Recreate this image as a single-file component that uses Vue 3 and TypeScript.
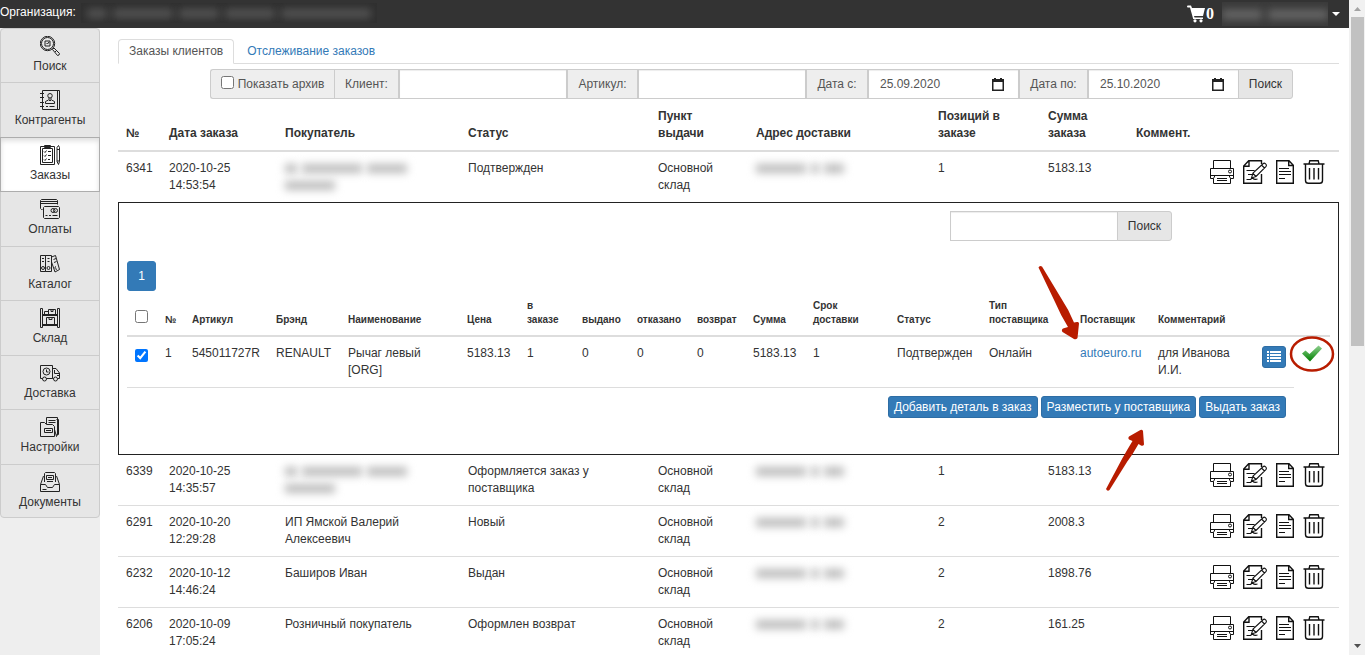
<script setup lang="ts">
import { ref } from 'vue'

interface MenuItem {
  title: string
  icon: string
}

interface Order {
  id: string
  date: string
  time: string
  customer: string
  status: string
  positions: number
  total: string
  open?: boolean
}

const menu: MenuItem[] = [
  { title: 'Поиск', icon: 'M7.500 1.500a6 6 0 1 0 0 12a6 6 0 1 0 0-12M7.500 .3a7.200 7.200 0 1 0 0 14.400a7.200 7.200 0 1 0 0-14.400M5 5h5v5H5zM6.500 7l1 1 1.500-2M12.500 13.500l1.500-1.500 5.500 5.500q0 2-2 2zM15 16l1.500-1.500' },
  { title: 'Контрагенты', icon: 'M2.500 .5h17v19h-17zM17.500 .5v19M0 3.500h4M0 7.500h4M0 12.500h4M0 16.500h4M10 3.500a2.200 2.200 0 1 0 0 4.500a2.200 2.200 0 1 0 0-4.500M9 8v2l1 1 1-1V8M5.500 13.500v-2l3-1.500M14.500 13.500v-2l-3-1.500M5.500 13.500h9M6 16.500h2M9.500 16.500h5' },
  { title: 'Заказы', icon: 'M.5 1.500h14v18H.5zM2.500 3.500h10v14h-10zM4.500 .5h6v2h-6zM4 6.500l1 1 1.500-2M8 6.500h3M4 10.500l1 1 1.500-2M8 10.500h3M4 14.500l1 1 1.500-2M8 14.500h2M17 2.500l1.500-2 1 2v14l-1 3-1.500-3zM17 4.500h2.500M17 16h2.500' },
  { title: 'Оплаты', icon: 'M2.500 10.500h-1l-1-1V1.500l1-1h15l1 1v4M.5 2.500h17M.5 4.500h17M3.500 8.500l1-1h14l1 1v10l-1 1h-14l-1-1zM13 9.500a2 2 0 1 0 0 4a2 2 0 1 0 0-4M15.500 9.500a2 2 0 1 0 0 4a2 2 0 1 0 0-4M5.500 16.500h2M9 16.500h2M12.500 16.500h5' },
  { title: 'Каталог', icon: 'M.5 1.500h5v16h-5zM5.500 1.500h6v16h-6zM2 4.500h2M2 7.500h2M7.500 4.500h2M7.500 7.500h2M3 12.500a1.500 1.500 0 1 0 0 3a1.500 1.500 0 1 0 0-3M8.500 12.500a1.500 1.500 0 1 0 0 3a1.500 1.500 0 1 0 0-3M11.500 3l4-1.500 4 14-4.500 2.500-3.500-10M13.500 5.500l2.500-1M14 8.500l2.500-1M16 12.500a1.400 1.400 0 1 0 1 2.600' },
  { title: 'Склад', icon: 'M.5 .5h2v19h-2zM17.500 .5h2v19h-2zM2.500 6.500h15M2.500 7.500h15M2.500 16.500h15M2.500 17.500h15M8.500 6.500v-5h7v5M11 1.500v2h2v-2M4.500 6.500v-3h4M6.500 16.500v-7h8v7M9 9.500v2h3v-2' },
  { title: 'Доставка', icon: 'M2.500 15.500h-2V2.500h12v13h-6M12.500 5.500h3.500l3.500 4.500v5.500h-2M12.500 15.500h1M14.500 7v3.500h4.500M4.500 14a2 2 0 1 0 0 4a2 2 0 1 0 0-4M15.500 14a2 2 0 1 0 0 4a2 2 0 1 0 0-4M6.500 5a3.500 3.500 0 1 0 0 7a3.500 3.500 0 1 0 0-7M6.500 6.500v2.500h2M17 12.500h2' },
  { title: 'Настройки', icon: 'M.5 19.500V5.500h4l2 2h6l2 2v10zM6.500 7V.5h11v17M8.500 3.500h7M8.500 5.500h7M16.500 2.500h2v15h-2M14.500 12.500l2 7 1-2M4.500 11.500h8v4h-8zM6 13.500h5' },
  { title: 'Документы', icon: 'M4.500 10V1.500l1-1h9l1 1V10M6.500 3.500h7v4h-7zM7 9.500h6M3.500 4L.5 12.500v7h19v-7L16.500 4M.5 12.500h5l2 3h5l2-3h5M2.500 17.500h4M8 5.500h4' }
]
const activeMenu = ref('Заказы')

const orders: Order[] = [
  { id: '6341', date: '2020-10-25', time: '14:53:54', customer: '', status: 'Подтвержден', positions: 1, total: '5183.13', open: true },
  { id: '6339', date: '2020-10-25', time: '14:35:57', customer: '', status: 'Оформляется заказ у поставщика', positions: 1, total: '5183.13' },
  { id: '6291', date: '2020-10-20', time: '12:29:28', customer: 'ИП Ямской Валерий Алексеевич', status: 'Новый', positions: 2, total: '2008.3' },
  { id: '6232', date: '2020-10-12', time: '14:46:24', customer: 'Баширов Иван', status: 'Выдан', positions: 2, total: '1898.76' },
  { id: '6206', date: '2020-10-09', time: '17:05:24', customer: 'Розничный покупатель', status: 'Оформлен возврат', positions: 2, total: '161.25' }
]

const showArchive = ref(false)
const client = ref('')
const article = ref('')
const dateFrom = ref('25.09.2020')
const dateTo = ref('25.10.2020')
const itemSearch = ref('')
const allChecked = ref(false)
const itemChecked = ref(true)
</script>

<template>
  <div class="app">
    <div class="window">
      <header class="topbar">
        <span class="org">Организация:</span>
        <span class="org-hidden" aria-hidden="true"><i class="w20"></i><i class="w60"></i><i class="w40"></i><i class="w50"></i><i class="w90"></i></span>
        <a class="cart" href="#" aria-label="Корзина">
          <svg width="19" height="18" viewBox="0 0 19 18" fill="#fff">
            <path d="M0 1.500Q0 .5 1 .5h3l1 2.500h13l-2 8H7l.5 1.500H16V14H6.200L3 2.500H1Q0 2.500 0 1.500z" />
            <circle cx="8" cy="15.800" r="1.600" /><circle cx="14" cy="15.800" r="1.600" />
          </svg><span>0</span>
        </a>
        <a class="user" href="#" aria-label="Пользователь">
          <span class="user-hidden" aria-hidden="true"><i class="w40"></i><i class="w60"></i></span>
          <span class="caret"></span>
        </a>
      </header>

      <div class="body">
        <aside class="sidebar">
          <nav class="menu">
            <button
              v-for="item in menu"
              :key="item.title"
              type="button"
              class="menu-item"
              :class="{ active: item.title === activeMenu }"
              @click="activeMenu = item.title"
            >
              <svg width="20" height="20" viewBox="0 0 20 20"><path :d="item.icon" /></svg>
              <span>{{ item.title }}</span>
            </button>
          </nav>
        </aside>

        <main class="main">
          <nav class="tabs">
            <a href="#" class="tab current">Заказы клиентов</a>
            <a href="#" class="tab">Отслеживание заказов</a>
          </nav>

          <form class="filter" @submit.prevent>
            <label class="addon archive"><input v-model="showArchive" type="checkbox" class="tick" /> Показать архив</label>
            <label class="addon client" for="client">Клиент:</label>
            <input id="client" v-model="client" type="text" class="field" />
            <label class="addon article" for="article">Артикул:</label>
            <input id="article" v-model="article" type="text" class="field" />
            <label class="addon from" for="from">Дата с:</label>
            <div class="date">
              <input id="from" v-model="dateFrom" type="text" />
              <svg width="12" height="13" viewBox="0 0 12 13"><path d="M2 0h2v1h4V0h2v1h2v12H0V1h2zM1.500 4v7.500h9V4z" fill="#222" fill-rule="evenodd" /></svg>
            </div>
            <label class="addon to" for="to">Дата по:</label>
            <div class="date">
              <input id="to" v-model="dateTo" type="text" />
              <svg width="12" height="13" viewBox="0 0 12 13"><path d="M2 0h2v1h4V0h2v1h2v12H0V1h2zM1.500 4v7.500h9V4z" fill="#222" fill-rule="evenodd" /></svg>
            </div>
            <button type="submit" class="search-btn">Поиск</button>
          </form>

          <table class="orders">
            <colgroup>
              <col class="c-id" /><col class="c-date" /><col class="c-customer" /><col class="c-status" /><col class="c-point" />
              <col class="c-address" /><col class="c-positions" /><col class="c-total" /><col /><col class="c-actions" />
            </colgroup>
            <thead>
              <tr>
                <th>№</th>
                <th>Дата заказа</th>
                <th>Покупатель</th>
                <th>Статус</th>
                <th>Пункт выдачи</th>
                <th>Адрес доставки</th>
                <th>Позиций в<br />заказе</th>
                <th>Сумма<br />заказа</th>
                <th>Коммент.</th>
                <th></th>
              </tr>
            </thead>
            <tbody>
              <template v-for="order in orders" :key="order.id">
                <tr class="order">
                  <td>{{ order.id }}</td>
                  <td>{{ order.date }}<br />{{ order.time }}</td>
                  <td>
                    <template v-if="order.customer">{{ order.customer }}</template>
                    <span v-else class="hidden-text" aria-hidden="true">
                      <span><i class="w12"></i><i class="w60"></i><i class="w40"></i></span>
                      <span><i class="w50"></i></span>
                    </span>
                  </td>
                  <td>{{ order.status }}</td>
                  <td>Основной<br />склад</td>
                  <td>
                    <span class="hidden-text" aria-hidden="true">
                      <span><i class="w50"></i><i class="w8"></i><i class="w20"></i></span>
                    </span>
                  </td>
                  <td>{{ order.positions }}</td>
                  <td>{{ order.total }}</td>
                  <td></td>
                  <td>
                    <div class="actions">
                      <button type="button" aria-label="Печать">
                        <svg width="24" height="24" viewBox="0 0 24 24">
                          <path d="M3.500 8V.5h17V8M.5 8.500h23v10h-3M3.500 18.500h-3v-10M.5 15.500h23M5 15.500l-1.500 3v5h17v-5l-1.500-3M7 18.500h10M7 20.500h10" />
                          <circle cx="20" cy="11.500" r="1.500" />
                        </svg>
                      </button>
                      <button type="button" aria-label="Редактировать">
                        <svg width="24" height="24" viewBox="0 0 24 24" class="bold">
                          <path d="M18.500 14v9.300H.7V6l5-5.300h12.800V4M1 6.200h5V1" />
                          <path d="M8.500 18l1.500-5L20.300 3.500q1-.8 2.300.4t.5 2.400L13 16.500zM10 13.500l3 3M18.500 5l3 3M3.500 10.500h8M5 14.500h4M3.500 19.500h4l2-1.500q2 2 5 1" class="thin" />
                        </svg>
                      </button>
                      <button type="button" aria-label="Документ">
                        <svg width="18" height="24" viewBox="0 0 18 24" class="bold">
                          <path d="M.7.7H13l4.300 4.500v18.100H.7zM12.700 1v4.500h4.500" />
                          <path d="M3 8.500h10M3 11.500h12M3 14.500h12M3 18.500h6" class="thin" />
                        </svg>
                      </button>
                      <button type="button" aria-label="Удалить">
                        <svg width="22" height="24" viewBox="0 0 22 24" class="bold">
                          <path d="M.5 4h21M6 3.800L6.800.7h8.400L16 3.800M2.500 4.500v16q0 2.800 2.800 2.800h11.400q2.800 0 2.800-2.800v-16M6.500 8v11.500M11 8v11.500M15.500 8v11.500" />
                        </svg>
                      </button>
                    </div>
                  </td>
                </tr>
                <tr v-if="order.open" class="detail-row">
                  <td colspan="10">
                    <section class="detail">
                      <form class="detail-search" @submit.prevent>
                        <input v-model="itemSearch" type="text" class="field" aria-label="Поиск" />
                        <button type="submit" class="search-btn">Поиск</button>
                      </form>
                      <div class="pager"><button type="button">1</button></div>
                      <table class="items">
                        <colgroup>
                          <col class="i-check" /><col class="i-num" /><col class="i-article" /><col class="i-brand" /><col class="i-name" />
                          <col class="i-price" /><col class="i-count" /><col class="i-count" /><col class="i-refused" /><col class="i-return" />
                          <col class="i-sum" /><col class="i-term" /><col class="i-status" /><col class="i-type" /><col class="i-supplier" />
                          <col /><col class="i-list" /><col class="i-done" />
                        </colgroup>
                        <thead>
                          <tr>
                            <th><input v-model="allChecked" type="checkbox" class="tick" aria-label="Выбрать все" /></th>
                            <th>№</th>
                            <th>Артикул</th>
                            <th>Брэнд</th>
                            <th>Наименование</th>
                            <th>Цена</th>
                            <th>в<br />заказе</th>
                            <th>выдано</th>
                            <th>отказано</th>
                            <th>возврат</th>
                            <th>Сумма</th>
                            <th>Срок<br />доставки</th>
                            <th>Статус</th>
                            <th>Тип<br />поставщика</th>
                            <th>Поставщик</th>
                            <th>Комментарий</th>
                            <th></th>
                            <th></th>
                          </tr>
                        </thead>
                        <tbody>
                          <tr>
                            <td><input v-model="itemChecked" type="checkbox" class="tick" aria-label="Выбрать позицию 1" /></td>
                            <td>1</td>
                            <td>545011727R</td>
                            <td>RENAULT</td>
                            <td>Рычаг левый<br />[ORG]</td>
                            <td>5183.13</td>
                            <td>1</td>
                            <td>0</td>
                            <td>0</td>
                            <td>0</td>
                            <td>5183.13</td>
                            <td>1</td>
                            <td>Подтвержден</td>
                            <td>Онлайн</td>
                            <td><a href="#">autoeuro.ru</a></td>
                            <td>для Иванова<br />И.И.</td>
                            <td>
                              <button type="button" class="list-btn" aria-label="Подробнее">
                                <svg width="14" height="12" viewBox="0 0 14 12" fill="#fff">
                                  <path d="M0 0h2v2H0zM3 0h11v2H3zM0 3h2v2H0zM3 3h11v2H3zM0 6h2v2H0zM3 6h11v2H3zM0 9h2v2H0zM3 9h11v2H3z" />
                                </svg>
                              </button>
                            </td>
                            <td>
                              <div class="done">
                                <svg width="20" height="17" viewBox="0 0 20 17">
                                  <defs>
                                    <linearGradient id="tick-fill" x1="0" y1="0" x2="0" y2="1">
                                      <stop offset="0" stop-color="#8fcf8f" />
                                      <stop offset=".55" stop-color="#3fa53f" />
                                      <stop offset="1" stop-color="#007c00" />
                                    </linearGradient>
                                  </defs>
                                  <path d="M0 8.500L3.500 5.500L7.500 9L16.500.5L20 3.500L8 16.500z" fill="url(#tick-fill)" />
                                </svg>
                                <svg class="ring" width="46" height="38" viewBox="0 0 46 38">
                                  <ellipse cx="23" cy="19" rx="21" ry="16.500" fill="none" stroke="#b81c00" stroke-width="2.500" />
                                </svg>
                              </div>
                            </td>
                          </tr>
                          <tr class="buttons">
                            <td colspan="17">
                              <div>
                                <button type="button">Добавить деталь в заказ</button>
                                <button type="button">Разместить у поставщика</button>
                                <button type="button">Выдать заказ</button>
                              </div>
                            </td>
                          </tr>
                        </tbody>
                      </table>
                    </section>
                    <svg class="arrows" width="110" height="235" viewBox="0 0 110 235" fill="#b81c00">
                      <path d="M3.500 5.500q1-2.500 3.500-1L26 36Q34 48 39 60.500L42 60q2-.5 2 1.500L42.500 76q-1.500 2-3.500 1L27.500 70q-1.500-2 .5-3.500L33 65Q26 54 20 40z" />
                      <path d="M104.500 168.500q2.500-1.500 3.500 .5L109 182.500q-1 2-3 1L103.500 182Q98 192 92 200L74.500 228q-2 2-3.500-1L87 197Q92 188 97.500 179L94 177.500q-1.500-1.500 0-3z" />
                    </svg>
                  </td>
                </tr>
              </template>
            </tbody>
          </table>
        </main>
      </div>
    </div>

    <div class="scrollbar" aria-hidden="true">
      <svg width="16" height="17" viewBox="0 0 16 17"><path d="M5 11h7l-3.500-4z" fill="#a3a3a3" /></svg>
      <div class="track"><div class="thumb"></div></div>
      <svg width="16" height="17" viewBox="0 0 16 17"><path d="M5 6h7l-3.500 4z" fill="#505050" /></svg>
    </div>
  </div>
</template>

<style>
body {
  margin: 0;
  background: #fff;
}
</style>

<style scoped>
* {
  box-sizing: border-box;
}

.app {
  display: flex;
  height: 100vh;
  overflow: hidden;
  color: #333;
  font: 12px/17px "Liberation Sans", Arial, sans-serif;
}

button,
input {
  font: inherit;
  color: inherit;
}

button {
  cursor: pointer;
}

a {
  color: #337ab7;
  text-decoration: none;
}

.window {
  flex: 1;
  min-width: 0;
  display: flex;
  flex-direction: column;
}

.topbar {
  flex: none;
  display: flex;
  align-items: center;
  height: 28px;
  background: #333;
  color: #fff;
}

.org {
  padding-bottom: 4px;
}

.org-hidden,
.user-hidden {
  display: flex;
  align-items: center;
  gap: 6px;
  height: 20px;
  margin-bottom: 2px;
  background: #2f2f2f;
  overflow: hidden;
}

.org-hidden {
  width: 296px;
  margin-left: 5px;
  padding-left: 6px;
}

.user-hidden {
  width: 106px;
  height: 24px;
  margin-bottom: 0;
  background: #3a3a3a;
}

i {
  height: 9px;
  background: #6a6a6a;
  filter: blur(4px);
}

.org-hidden i {
  background: #555;
}

.w8 { width: 8px; }
.w12 { width: 12px; }
.w20 { width: 20px; }
.w40 { width: 40px; }
.w50 { width: 50px; }
.w60 { width: 60px; }
.w90 { width: 90px; }

.cart {
  display: flex;
  align-items: center;
  margin-left: auto;
  color: #fff;
  font: bold 16px/18px "Liberation Serif", "Times New Roman", serif;
}

.user {
  display: flex;
  align-items: center;
  gap: 4px;
  margin-left: 8px;
  padding-right: 9px;
}

.caret {
  border: 4px solid transparent;
  border-top-color: #fff;
  border-bottom: 0;
}

.body {
  flex: 1;
  min-height: 0;
  display: flex;
}

.sidebar {
  flex: none;
  width: 100px;
  background: #eee;
}

.menu {
  display: grid;
  grid-auto-rows: 1fr;
  min-height: 490px;
}

.menu-item {
  display: flex;
  flex-direction: column;
  align-items: center;
  gap: 2px;
  margin: 0 0 -1px;
  padding: 7px 0 0;
  background: #e6e6e6;
  border: 1px solid #ccc;
}

.menu-item:first-child {
  border-radius: 4px 4px 0 0;
}

.menu-item:last-child {
  margin-bottom: 0;
  border-radius: 0 0 4px 4px;
}

.menu-item.active {
  position: relative;
  background: #fff;
  border-color: #adadad;
  box-shadow: inset 0 3px 5px rgba(0, 0, 0, 0.125);
}

.menu-item path {
  fill: none;
  stroke: #222;
  stroke-width: 1;
}

.main {
  flex: 1;
  min-width: 0;
  padding: 11px 10px 0 18px;
}

.tabs {
  display: flex;
  gap: 2px;
  height: 25px;
  border-bottom: 1px solid #ddd;
}

.tab {
  height: 25px;
  padding: 3px 10px;
  border: 1px solid transparent;
  border-radius: 4px 4px 0 0;
}

.tab.current {
  background: #fff;
  border-color: #ddd #ddd #fff;
  color: #555;
}

.filter {
  display: flex;
  height: 30px;
  margin: 5px 0 1px 92px;
}

.addon {
  flex: none;
  display: flex;
  align-items: center;
  justify-content: center;
  background: #eee;
  border: 1px solid #ccc;
  color: #555;
}

.archive {
  gap: 4px;
  width: 124px;
  border-right: 0;
  border-radius: 3px 0 0 3px;
}

.client { width: 65px; }
.article { width: 71px; }
.from { width: 62px; }
.to { width: 69px; }

.tick {
  width: 13px;
  height: 13px;
  margin: 0;
}

.archive .tick {
  margin-bottom: 4px;
}

.field {
  flex: none;
  width: 168px;
  height: 30px;
  padding: 5px 10px;
  background: #fff;
  border: 1px solid #ccc;
  border-radius: 0;
  outline: 0;
  box-shadow: inset 0 1px 1px rgba(0, 0, 0, 0.075);
}

.date {
  flex: none;
  display: flex;
  align-items: center;
  width: 151px;
  padding: 0 14px 0 11px;
  border: 1px solid #ccc;
  box-shadow: inset 0 1px 1px rgba(0, 0, 0, 0.075);
}

.date input {
  flex: 1;
  min-width: 0;
  padding: 0;
  border: 0;
  outline: 0;
  background: none;
  color: #555;
}

.search-btn {
  flex: none;
  width: 55px;
  height: 30px;
  margin: 0 0 0 -1px;
  padding: 0;
  background: #e6e6e6;
  border: 1px solid #ccc;
  border-radius: 0 3px 3px 0;
}

table {
  width: 100%;
  table-layout: fixed;
  border-collapse: separate;
  border-spacing: 0;
}

th,
td {
  padding: 8px;
  text-align: left;
  vertical-align: top;
}

th {
  vertical-align: bottom;
  border-bottom: 2px solid #ddd;
}

.c-id { width: 43px; }
.c-date { width: 116px; }
.c-customer { width: 183px; }
.c-status { width: 190px; }
.c-point { width: 98px; }
.c-address { width: 182px; }
.c-positions { width: 110px; }
.c-total { width: 88px; }
.c-actions { width: 137px; }

.order ~ .order:not(.detail-row + .order) > td {
  border-top: 1px solid #ddd;
}

.order > td {
  height: 50px;
}

.order > td:last-child {
  padding-right: 0;
}

.hidden-text {
  display: block;
}

.hidden-text > span {
  display: flex;
  align-items: center;
  gap: 5px;
  width: max-content;
  height: 17px;
}

.hidden-text i {
  background: #bbb;
}

.actions {
  display: flex;
  gap: 9px;
}

.actions button {
  display: block;
  padding: 0;
  background: none;
  border: 0;
}

.actions svg {
  display: block;
  fill: none;
  stroke: #111;
  stroke-width: 1;
}

.actions .bold {
  stroke-width: 1.4;
}

.actions .thin {
  stroke-width: 1.1;
}

.detail-row > td {
  position: relative;
  padding: 0;
}

.detail {
  padding: 8px 8px 28px;
  border: 1px solid #222;
}

.detail-search {
  display: flex;
  justify-content: flex-end;
  padding-right: 158px;
}

.pager {
  display: flex;
  margin-top: 20px;
}

.pager button {
  width: 29px;
  height: 30px;
  padding: 0;
  background: #337ab7;
  border: 1px solid #337ab7;
  border-radius: 3px;
  color: #fff;
}

.items th {
  font-size: 10px;
  line-height: 14px;
  white-space: nowrap;
}

.items tbody td {
  height: 50px;
  white-space: nowrap;
}

.i-check { width: 30px; }
.i-num { width: 27px; }
.i-article { width: 84px; }
.i-brand { width: 72px; }
.i-name { width: 119px; }
.i-price { width: 60px; }
.i-count { width: 55px; }
.i-refused { width: 60px; }
.i-return { width: 56px; }
.i-sum { width: 60px; }
.i-term { width: 84px; }
.i-status { width: 92px; }
.i-type { width: 91px; }
.i-supplier { width: 78px; }
.i-list { width: 40px; }
.i-done { width: 36px; }

.items .tick {
  display: block;
}

.items th .tick {
  margin-bottom: 4px;
}

.items td .tick {
  margin-top: 4px;
}

.list-btn {
  display: flex;
  align-items: center;
  justify-content: center;
  width: 24px;
  height: 22px;
  margin-top: 1px;
  padding: 0;
  background: #337ab7;
  border: 1px solid #2e6da4;
  border-radius: 3px;
}

.done {
  position: relative;
}

.done svg {
  display: block;
}

.done .ring {
  position: absolute;
  top: -10px;
  left: -13px;
}

.items .buttons td {
  height: auto;
  border-top: 1px solid #ddd;
}

.buttons div {
  display: flex;
  justify-content: flex-end;
  gap: 3px;
}

.buttons button {
  height: 22px;
  padding: 0 5px;
  background: #337ab7;
  border: 1px solid #2e6da4;
  border-radius: 3px;
  color: #fff;
}

.arrows {
  position: absolute;
  top: 60px;
  right: 194px;
  pointer-events: none;
}

.scrollbar {
  flex: none;
  display: flex;
  flex-direction: column;
  width: 16px;
  background: #f1f1f1;
}

.track {
  flex: 1;
  padding: 0 1px 0 2px;
}

.thumb {
  height: 53%;
  background: #c1c1c1;
}
</style>
